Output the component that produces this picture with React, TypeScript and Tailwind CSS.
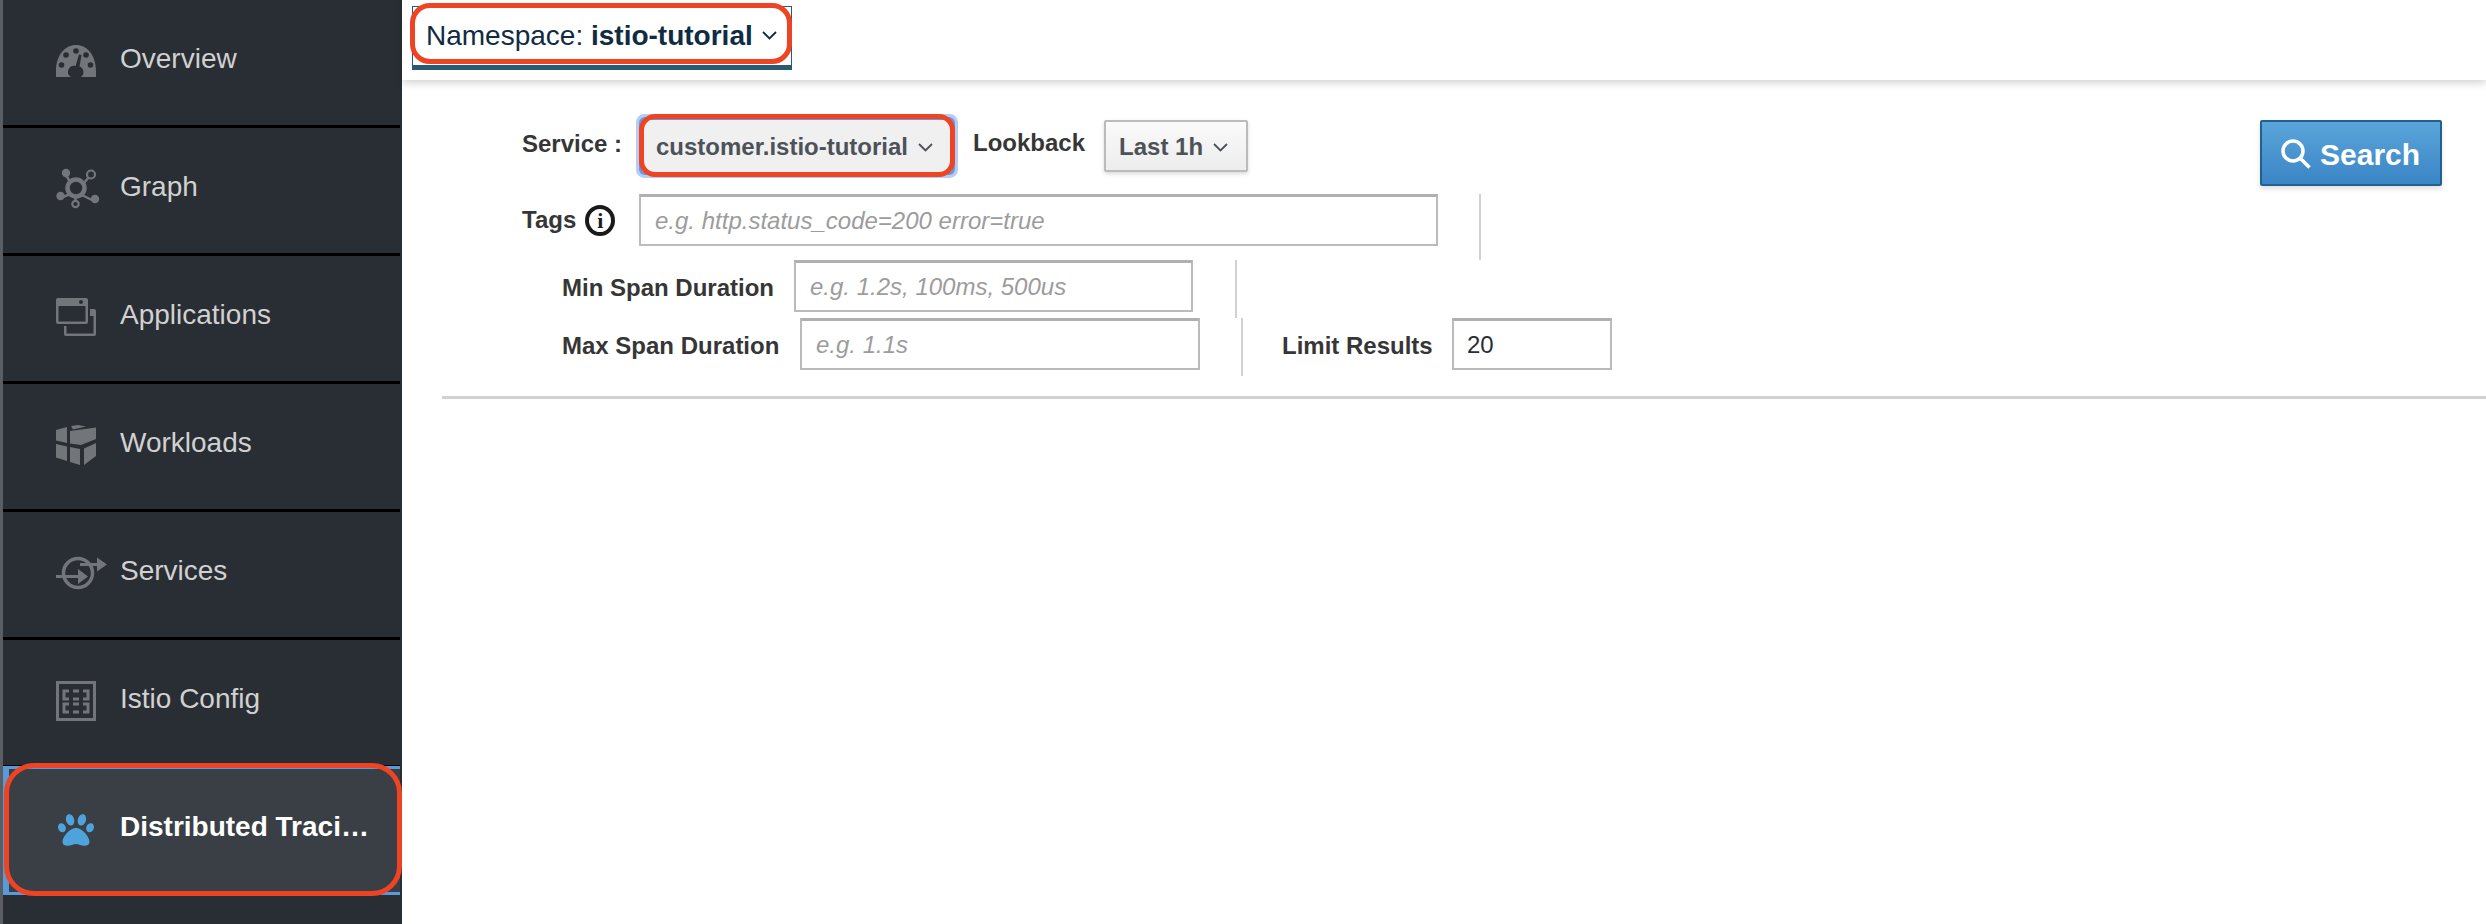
import React from 'react';
import { FaPaw } from 'react-icons/fa';

const OverviewIcon = () => <svg width="40" height="32" viewBox="0 0 40 32">
    <path fillRule="evenodd" fill="#72767b" d="M0 32 V26 C0 10 9 0 20 0 C31 0 40 10 40 26 V32 H25 A6 6 0 0 0 23.500 21.500 L25.500 10 L23 9.500 L19.500 21 A6 6 0 0 0 15 32 Z" />
    <circle cx="20" cy="6" r="2.800" fill="#292e34" />
    <circle cx="10" cy="10" r="2.800" fill="#292e34" />
    <circle cx="30" cy="10" r="2.800" fill="#292e34" />
    <circle cx="5.500" cy="20" r="2.800" fill="#292e34" />
    <circle cx="34.500" cy="20" r="2.800" fill="#292e34" />
  </svg>;

const GraphIcon = () => <svg width="44" height="42" viewBox="0 0 44 42" fill="none">
    <g stroke="#72767b" strokeWidth="2.500">
      <path d="M10 7 L20 24 M34 8 L20 24 L38 33 M4 30 L20 24 L19 38" />
    </g>
    <circle cx="20" cy="20" r="8.500" fill="#292e34" stroke="#72767b" strokeWidth="4.500" />
    <circle cx="10" cy="5" r="4.200" fill="#72767b" />
    <circle cx="35" cy="6.500" r="4" fill="#292e34" stroke="#72767b" strokeWidth="2.200" />
    <circle cx="4.500" cy="28" r="4.200" fill="#72767b" />
    <circle cx="39" cy="31" r="4.200" fill="#72767b" />
    <circle cx="19.500" cy="36" r="3.200" fill="#292e34" stroke="#72767b" strokeWidth="2.200" />
  </svg>;

const ApplicationsIcon = () => <svg width="40" height="38" viewBox="0 0 40 38" fill="none">
    <path fill="#72767b" fillRule="evenodd" d="M2 0 H30 A2 2 0 0 1 32 2 V24 A2 2 0 0 1 30 26 H2 A2 2 0 0 1 0 24 V2 A2 2 0 0 1 2 0 Z M2.500 8 V23.500 H29.500 V8 Z" />
    <circle cx="25" cy="4" r="2" fill="#292e34" />
    <path fill="#72767b" d="M34 11 H38 A2 2 0 0 1 40 13 V36 A2 2 0 0 1 38 38 H10 A2 2 0 0 1 8 36 V28 H10.500 V35.500 H37.500 V18 H34 Z" />
  </svg>;

const WorkloadsIcon = () => <svg width="40" height="40" viewBox="0 0 40 40" fill="#72767b">
    <path d="M0 5 L11 2 V18 L0 15.500 Z" />
    <path d="M15 1 L22 0 L30 1.500 L17 4.500 Z" />
    <path d="M14 6 L40 2.500 V14 L25 20 L14 18.500 Z" />
    <path d="M0 19 L11 21.500 V36 L0 32.500 Z" />
    <path d="M14 22 L24 24 V40 L14 37 Z" />
    <path d="M28 23.500 L40 18 V31 L28 40 Z" />
  </svg>;

const ServicesIcon = () => <svg width="52" height="36" viewBox="0 0 52 36" fill="none">
    <circle cx="22" cy="18" r="14.500" stroke="#72767b" strokeWidth="3.500" />
    <path d="M0 21.500 H22 M24 9.500 H42" stroke="#72767b" strokeWidth="3" />
    <path d="M22 14 L32 21.500 L22 29 Z M41 2.500 L51 9.500 L41 16.500 Z" fill="#72767b" />
  </svg>;

const ConfigIcon = () => <svg width="40" height="40" viewBox="0 0 40 40" fill="none" stroke="#72767b">
    <rect x="1.500" y="1.500" width="37" height="37" strokeWidth="3" />
    <g strokeWidth="3">
      <path d="M13 10 H8 V18 H13 M17 10 H23 M17 18 H23 M27 10 H32 V18 H27" />
      <path d="M13 23 H8 V31 H13 M17 23 H23 M17 31 H23 M27 23 H32 V31 H27" />
    </g>
  </svg>;

const Chevron = ({ color = '#4d5258' }: { color?: string }) => <svg width="15" height="9" viewBox="0 0 15 9" fill="none" className="shrink-0">
    <path d="M1 1 L7.500 7.500 L14 1" stroke={color} strokeWidth="1.800" />
  </svg>;

const navItems = [
  { label: 'Overview', icon: <OverviewIcon /> },
  { label: 'Graph', icon: <GraphIcon /> },
  { label: 'Applications', icon: <ApplicationsIcon /> },
  { label: 'Workloads', icon: <WorkloadsIcon /> },
  { label: 'Services', icon: <ServicesIcon /> },
  { label: 'Istio Config', icon: <ConfigIcon /> }
];

const TextField = ({ placeholder, value, className }: { placeholder?: string; value?: string; className: string }) => <input readOnly value={value} placeholder={placeholder} className={`h-[52px] border-2 border-t-[3px] border-[#bbbbbb] border-t-[#b0b0b0] bg-white text-[24px] font-normal text-[#292e34] placeholder:text-[#9c9c9c] outline-none ${className}`} />;

export default function App() {
  return <div className="flex h-[924px] w-[2486px] overflow-hidden bg-white font-['Liberation_Sans',Arial,sans-serif]">
      {/* Sidebar */}
      <div className="w-[402px] shrink-0 bg-[#292e34] border-l-[3px] border-l-[#5a5d61] flex flex-col">
        {navItems.map(item => <div key={item.label} className="h-[128px] w-[397px] shrink-0 border-b-[3px] border-black pl-[53px] pb-[8px] flex items-center">
            <div className="w-[64px] shrink-0 mt-[4px] flex">{item.icon}</div>
            <span className="text-[28px] leading-[34px] text-[#d1d1d1]">{item.label}</span>
          </div>)}
        {/* Active item */}
        <div className="relative -mt-[2px] h-[129px] w-[397px] shrink-0 bg-[#393f44] border-y-[3px] border-l-[6px] border-[#5b9ad8] pl-[47px] pb-[8px] flex items-center">
          <div className="w-[64px] shrink-0 mt-[6px] flex pl-[2px]">
            <FaPaw size={36} color="#4fa3dc" />
          </div>
          <span className="w-[252px] truncate text-[28px] leading-[34px] font-bold text-white">Distributed Tracing</span>
          <div className="absolute -left-[5px] -top-[6px] -right-[2px] -bottom-[4px] rounded-[30px] border-[5px] border-[#ee4423]" />
        </div>
      </div>
      {/* Main */}
      <div className="flex-1 flex flex-col">
        <div className="h-[80px] shrink-0 pl-[10px] pt-[6px] shadow-[0_3px_8px_rgba(0,0,0,0.18)]">
          <div className="relative w-[380px] h-[64px] border-[1px] border-b-[5px] border-[#2b5a73] pl-[13px] pb-[1px] flex items-center text-[28px] text-[#0f2c42]">
            <span>Namespace:&nbsp;</span>
            <span className="font-bold">istio-tutorial</span>
            <span className="ml-[9px]"><Chevron color="#0f2c42" /></span>
            <div className="absolute -left-[3px] -top-[4px] -right-[1px] bottom-[1px] rounded-[20px] border-[5px] border-[#ee4423]" />
          </div>
        </div>
        {/* Search form */}
        <div className="pt-[40px] text-[24px] font-bold text-[#363636]">
          <div className="h-[74px] pl-[120px] pr-[44px] flex items-start">
            <span className="w-[120px] h-[48px] flex items-center">Service :</span>
            <div className="relative w-[310px] h-[52px] bg-[#f0f0f0] rounded-[3px] shadow-[0_0_0_3px_#6a95e0,0_0_0_6px_#b5cdf5] pl-[14px] pt-[2px] flex items-center text-[#4d5258]">
              customer.istio-tutorial
              <span className="ml-[10px]"><Chevron /></span>
              <div className="absolute -left-[3px] -top-[6px] -right-[3px] -bottom-[5px] rounded-[16px] border-[5px] border-[#ee4423]" />
            </div>
            <span className="ml-[21px] h-[46px] flex items-center">Lookback</span>
            <div className="ml-[19px] w-[144px] h-[52px] border-2 border-[#bbbbbb] bg-gradient-to-b from-[#fafafa] to-[#ededed] rounded-[2px] shadow-[0_2px_4px_rgba(0,0,0,0.15)] pl-[13px] pt-[2px] flex items-center text-[#4d5258]">
              Last 1h
              <span className="ml-[10px]"><Chevron /></span>
            </div>
            <button className="ml-auto w-[182px] h-[66px] rounded-[2px] border-[2px] border-[#22618f] bg-gradient-to-b from-[#5aa5da] to-[#3a85c5] shadow-[0_3px_5px_rgba(0,0,0,0.12)] flex items-center pl-[19px] pt-[2px] gap-[9px] text-[30px] text-white">
              <svg width="30" height="30" viewBox="0 0 30 30" fill="none" stroke="white" strokeWidth="3.500">
                <circle cx="12" cy="12" r="10" />
                <path d="M19 19 L28.500 28.500" />
              </svg>
              Search
            </button>
          </div>
          <div className="h-[66px] pl-[120px] flex items-start">
            <div className="w-[117px] h-[52px] flex items-center gap-[9px]">
              <span>Tags</span>
              <span className="w-[30px] h-[31px] rounded-[50%] border-[4px] border-[#1a1a1a] flex items-center justify-center font-['Liberation_Serif',serif] text-[22px] text-[#1a1a1a]">i</span>
            </div>
            <TextField placeholder="e.g. http.status_code=200 error=true" className="w-[799px] pl-[14px] italic" />
            <div className="ml-[41px] self-stretch border-l-2 border-[#d1d1d1]" />
          </div>
          <div className="h-[58px] pl-[160px] flex items-start">
            <span className="w-[232px] h-[56px] flex items-center">Min Span Duration</span>
            <TextField placeholder="e.g. 1.2s, 100ms, 500us" className="w-[399px] pl-[14px] italic" />
            <div className="ml-[42px] self-stretch border-l-2 border-[#d1d1d1]" />
          </div>
          <div className="h-[58px] pl-[160px] flex items-start">
            <span className="w-[238px] h-[56px] flex items-center">Max Span Duration</span>
            <TextField placeholder="e.g. 1.1s" className="w-[400px] pl-[14px] italic" />
            <div className="ml-[41px] self-stretch border-l-2 border-[#d1d1d1]" />
            <span className="ml-[39px] w-[170px] h-[56px] flex items-center">Limit Results</span>
            <TextField value="20" className="w-[160px] pl-[13px]" />
          </div>
          <div className="ml-[40px] mt-[20px] border-t-[3px] border-[#d1d1d1]" />
        </div>
      </div>
    </div>;
}
